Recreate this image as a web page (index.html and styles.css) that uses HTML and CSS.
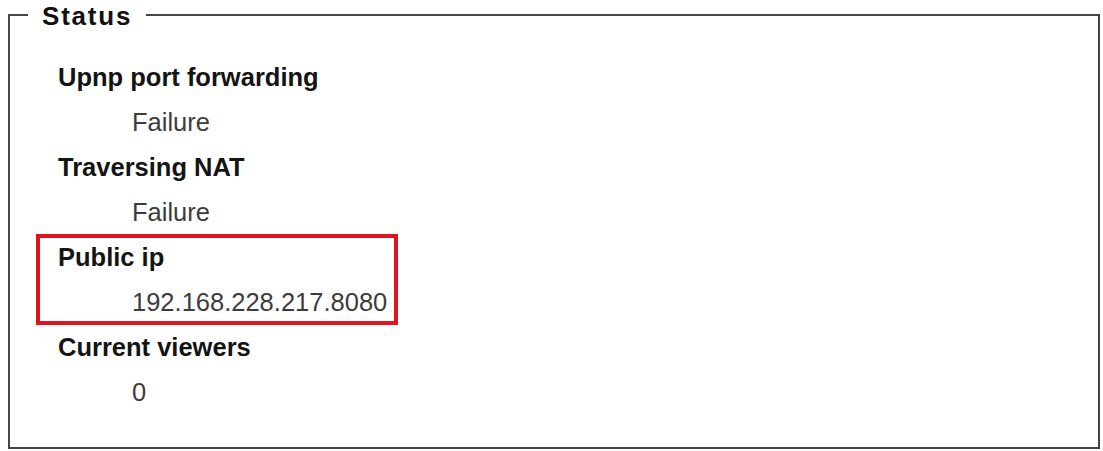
FILE: index.html
```html
<!DOCTYPE html>
<html lang="en">
<head>
<meta charset="utf-8">
<title>Status</title>
<link rel="stylesheet" href="styles.css">
</head>
<body>
<fieldset class="status">
  <legend class="status-title">Status</legend>
  <dl class="status-list">
    <div class="status-item">
      <dt>Upnp port forwarding</dt>
      <dd>Failure</dd>
    </div>
    <div class="status-item">
      <dt>Traversing NAT</dt>
      <dd>Failure</dd>
    </div>
    <div class="status-item highlight">
      <dt>Public ip</dt>
      <dd>192.168.228.217.8080</dd>
    </div>
    <div class="status-item">
      <dt>Current viewers</dt>
      <dd>0</dd>
    </div>
  </dl>
</fieldset>
</body>
</html>
```

FILE: styles.css
```css
html, body {
  margin: 0;
  padding: 0;
  background: #ffffff;
}

body {
  font-family: "Liberation Sans", Arial, sans-serif;
  font-size: 25.5px;
  color: #1a1a1a;
}

.status {
  box-sizing: border-box;
  height: 449px;
  margin: 0 3px 0 8px;
  padding: 26px 18px 0 18px;
  border: 2px solid #454545;
  min-width: 0;
}

.status-title {
  padding: 4px 14px 0 14px;
  margin: 0;
  font-weight: bold;
  font-size: 26px;
  line-height: 25px;
  letter-spacing: 1.8px;
  color: #111111;
}

.status-list {
  margin: 0 0 0 30px;
  padding: 0;
}

.status-item dt {
  margin: 0;
  font-weight: bold;
  line-height: 45px;
  color: #141414;
}

.status-item dd {
  margin: 0 0 0 74px;
  line-height: 45px;
  color: #3c3c3c;
}

.highlight {
  position: relative;
}

.highlight::after {
  content: "";
  position: absolute;
  top: -1px;
  left: -22px;
  width: 362px;
  height: 91px;
  box-sizing: border-box;
  border: 4px solid #e0141e;
  pointer-events: none;
}
```
